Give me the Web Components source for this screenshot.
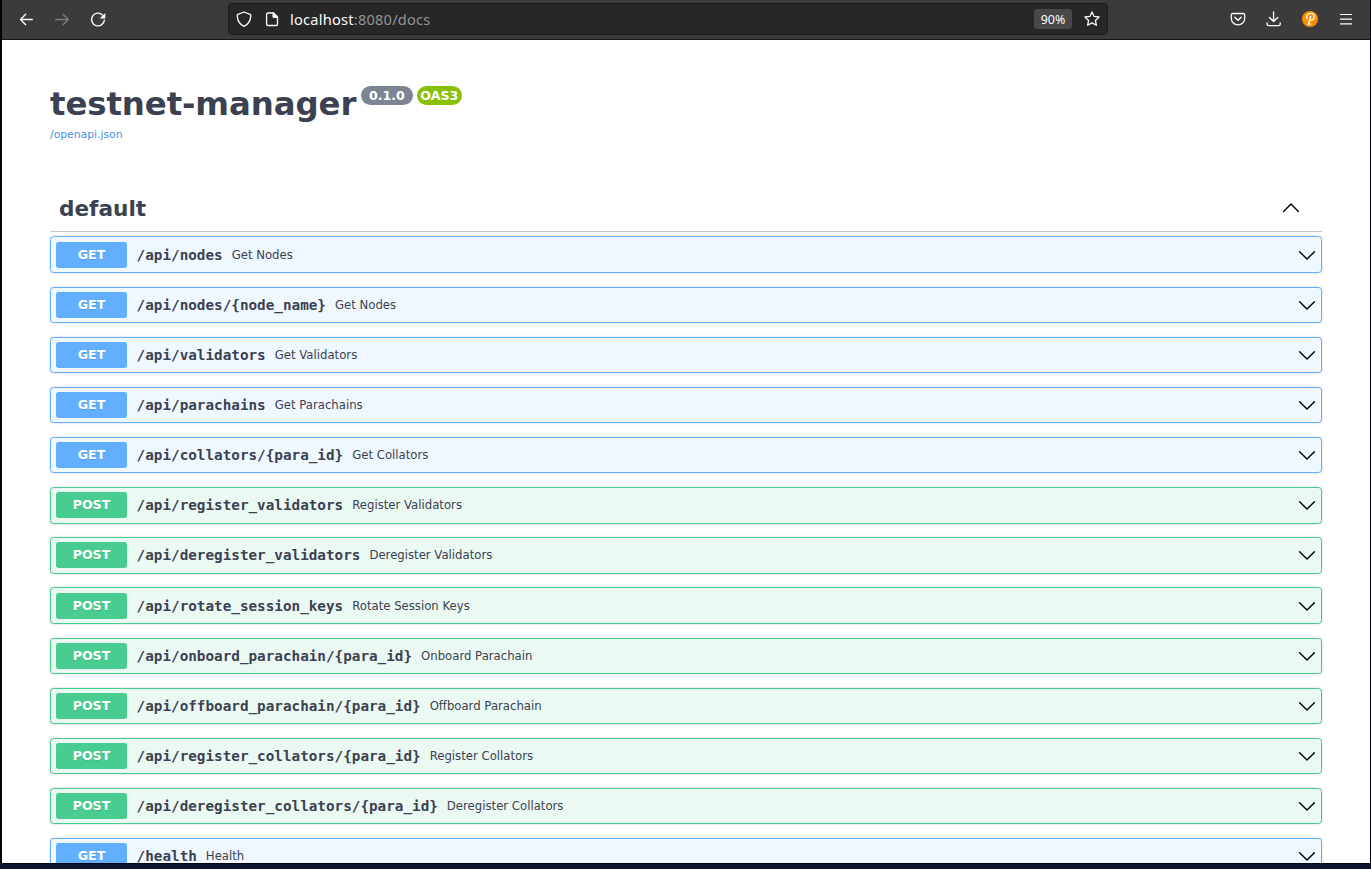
<!DOCTYPE html>
<html lang="en">
<head>
<meta charset="utf-8">
<title>testnet-manager</title>
<style>
html,body{margin:0;height:100%;overflow:hidden;background:#11142f}
body{font-family:"DejaVu Sans",sans-serif;color:#3b4151}
</style>
</head>
<body>
<browser-window></browser-window>
<script>
class Base extends HTMLElement{
  constructor(){super();this.attachShadow({mode:'open'})}
  connectedCallback(){this.shadowRoot.innerHTML=this.render()}
}

customElements.define('nav-icon',class extends Base{
  render(){
    const s='fill="none" stroke="currentColor" stroke-linecap="round" stroke-linejoin="round"';
    const icons={
      back:`<path ${s} stroke-width="1.4" d="M14.300 8.500H2.500M7.700 3.200 2.500 8.500l5.200 5.200"/>`,
      forward:`<path ${s} stroke-width="1.4" d="M1.700 8.500h12.600M9.100 3.200l5.200 5.300-5.200 5.200"/>`,
      reload:`<path ${s} stroke-width="1.4" d="M12.500 3.900A6.400 6.400 0 1 0 14.400 9.200"/><path fill="currentColor" d="M15.300 1.900v5.100a.5.5 0 0 1-.5.5H9.700z"/>`,
      shield:`<path ${s} stroke-width="1.300" d="M8 1 14 3.400c.7.3.9.7.8 1.500C14.500 9.700 12 13.500 8 15.400 4 13.500 1.500 9.700 1.200 4.900 1.100 4.100 1.300 3.700 2 3.400z"/>`,
      page:`<path ${s} stroke-width="1.300" d="M9.500 2H4Q2.600 2 2.600 3.400v9.800Q2.600 14.500 4 14.500h8.200q1.300 0 1.300-1.300V6z"/><path fill="currentColor" d="M8.500 1.500h1.300l4.300 4.200v1.400H9.800Q8.500 7.100 8.500 5.800z"/>`,
      star:`<path ${s} stroke-width="1.300" d="M8 .9l2.100 4.500 5 .6-3.700 3.400 1 4.900L8 11.900l-4.400 2.400 1-4.900L.9 6l5-.6z"/>`,
      pocket:`<path ${s} stroke-width="1.300" d="M3 2.500h10q1.700 0 1.700 1.700v3.200a6.700 6.400 0 0 1-13.400 0V4.200Q1.300 2.500 3 2.500z"/><path ${s} stroke-width="1.500" d="M4.800 6.300 8 9.300l3.200-3"/>`,
      download:`<path ${s} stroke-width="1.400" d="M7.600.9v9.600M3.500 6.500 7.600 10.600l4.100-4.100M1.100 11.900v1.100q0 1.600 1.600 1.600h9.900q1.600 0 1.600-1.600v-1.100"/>`,
      avatar:`<circle cx="8" cy="8" r="8" fill="#ff8c00"/><path fill="none" stroke="#fff" stroke-width="1.300" stroke-linecap="round" stroke-linejoin="round" d="M5 7.600C3.700 5.200 5.500 2.600 8.700 2.400c2.400-.1 3.900 1.400 3.600 3.400-.3 2.200-2.200 3.600-4.500 3.500M8.700 5.300 6.300 13.800"/><circle cx="8.500" cy="13.300" r=".8" fill="#fff"/>`,
      menu:`<path fill="none" stroke="currentColor" stroke-width="1.200" d="M2 3.500h12M2 8.200h12M2 12.800h12"/>`
    };
    return `<style>:host{display:block;width:16px;height:16px;flex:none;color:#fbfbfe}svg{display:block;overflow:visible}</style>
    <svg width="16" height="16" viewBox="0 0 16 16">${icons[this.getAttribute('name')]}</svg>`;
  }
});

customElements.define('address-bar',class extends Base{
  render(){return `<style>
    :host{box-sizing:border-box;display:flex;align-items:center;width:880px;height:32px;border:1px solid #1b1b1b;border-radius:4px;background:#272727;color:#fbfbfe;padding:0 7px;font-family:"Noto Sans",sans-serif}
    .url{margin-left:10px;font-size:14.6px;line-height:20px;flex:1;letter-spacing:.23px;white-space:nowrap}
    .url span{color:#929292}
    .zoom{width:38px;height:20px;line-height:21px;border-radius:3px;background:#484848;text-align:center;font-size:12.4px;margin-right:12px}
    nav-icon+nav-icon{margin-left:12px}
    </style><nav-icon name="shield"></nav-icon><nav-icon name="page"></nav-icon>
    <div class="url">localhost<span>:8080/docs</span></div><div class="zoom">90%</div><nav-icon name="star"></nav-icon>`}
});

customElements.define('browser-toolbar',class extends Base{
  render(){return `<style>
    :host{box-sizing:border-box;display:flex;align-items:center;height:40px;background:#3b3b3b;border-bottom:1px solid #151515;padding:0 16px 1px}
    .nav,.tools{display:flex;gap:20px}
    address-bar{margin-left:122px}
    .tools{margin-left:auto}
    .dim{color:#7c7c7c}
    </style><div class="nav"><nav-icon name="back"></nav-icon><nav-icon name="forward" class="dim"></nav-icon><nav-icon name="reload"></nav-icon></div>
    <address-bar></address-bar>
    <div class="tools"><nav-icon name="pocket"></nav-icon><nav-icon name="download"></nav-icon><nav-icon name="avatar"></nav-icon><nav-icon name="menu"></nav-icon></div>`}
});

customElements.define('version-badge',class extends Base{
  render(){return `<style>:host{display:block;box-sizing:border-box;height:19px;line-height:19px;border-radius:10px;background:#7d8492;color:#fff;font-weight:700;font-size:12.6px;text-align:center;width:52px}
    :host([kind=spec]){background:#89bf04;width:45px}</style><slot></slot>`}
});

customElements.define('api-info',class extends Base{
  render(){return `<style>
    :host{display:block;height:146px;padding-top:45px;box-sizing:border-box}
    .head{display:flex;height:39px;align-items:flex-start}
    h1{margin:0 4.500px 0 0;font-size:32.4px;line-height:39px;font-weight:700;white-space:nowrap;letter-spacing:-.1px}
    version-badge{margin:1px 4px 0 0}
    a{display:block;margin-top:4px;font-size:10.8px;line-height:14px;color:#4990e2;text-decoration:none}
    </style><div class="head"><h1>testnet-manager</h1><version-badge>0.1.0</version-badge><version-badge kind="spec">OAS3</version-badge></div><a href="#">/openapi.json</a>`}
});

customElements.define('chevron-icon',class extends Base{
  render(){const up=this.getAttribute('dir')==='up';
    return `<style>:host{display:block;width:18px;height:18px;flex:none}svg{display:block}</style><svg width="18" height="18" viewBox="0 0 18 18"><path fill="none" stroke="#000" stroke-width="1.4" stroke-linecap="round" stroke-linejoin="round" d="${up?'M1.600 11.500 9 4.100l7.400 7.400':'M1.600 5.700 9 13.100l7.400-7.400'}"/></svg>`}
});

customElements.define('api-operation',class extends Base{
  render(){return `<style>
    :host{--c:#61affe;--bg:#eff7ff;box-sizing:border-box;display:flex;align-items:center;height:36.5px;border:1px solid var(--c);border-radius:3.6px;background:var(--bg);box-shadow:0 0 2.7px rgba(0,0,0,.19);padding:0 5px}
    :host([method=POST]){--c:#49cc90;--bg:#ebf9f3}
    .method{width:71px;height:26px;line-height:26px;background:var(--c);border-radius:2.7px;color:#fff;font-weight:700;font-size:12.6px;text-align:center;text-shadow:0 1px 0 rgba(0,0,0,.1)}
    .path{margin-left:9.600px;font:700 14.310px/18px "DejaVu Sans Mono",monospace;white-space:nowrap}
    .summary{margin-left:9px;font-size:11.700px;line-height:16px;flex:1;white-space:nowrap}
    </style><div class="method">${this.getAttribute('method')}</div><div class="path">${this.getAttribute('path')}</div><div class="summary"><slot></slot></div><chevron-icon></chevron-icon>`}
});

customElements.define('api-section',class extends Base{
  render(){return `<style>
    :host{display:block}
    header{box-sizing:border-box;display:flex;align-items:center;justify-content:space-between;height:46px;border-bottom:1px solid #c4c6cb;padding:0 22px 0 9px}
    h2{margin:0;font-size:21.600px;line-height:26px;font-weight:700}
    .list{display:flex;flex-direction:column;gap:13.641px;padding-top:4.391px}
    </style><header><h2>default</h2><chevron-icon dir="up"></chevron-icon></header><div class="list"><slot></slot></div>`}
});

customElements.define('browser-window',class extends Base{
  render(){
    const ops=[['GET','/api/nodes','Get Nodes'],['GET','/api/nodes/{node_name}','Get Nodes'],['GET','/api/validators','Get Validators'],['GET','/api/parachains','Get Parachains'],['GET','/api/collators/{para_id}','Get Collators'],['POST','/api/register_validators','Register Validators'],['POST','/api/deregister_validators','Deregister Validators'],['POST','/api/rotate_session_keys','Rotate Session Keys'],['POST','/api/onboard_parachain/{para_id}','Onboard Parachain'],['POST','/api/offboard_parachain/{para_id}','Offboard Parachain'],['POST','/api/register_collators/{para_id}','Register Collators'],['POST','/api/deregister_collators/{para_id}','Deregister Collators'],['GET','/health','Health']];
    return `<style>
    :host{display:block;box-sizing:border-box;height:869px;padding:0 1px 6px 2px;background:linear-gradient(#030410 0 863px,#02030c 863px 864px,#11142f 864px)}
    .window{height:863px;display:flex;flex-direction:column;background:#fff;overflow:hidden}
    main{flex:1;min-height:0;overflow:hidden;padding:0 48px}
    </style><div class="window"><browser-toolbar></browser-toolbar><main><api-info></api-info><api-section>${ops.map(o=>`<api-operation method="${o[0]}" path="${o[1]}">${o[2]}</api-operation>`).join('')}</api-section></main></div>`}
});
</script>
</body>
</html>
